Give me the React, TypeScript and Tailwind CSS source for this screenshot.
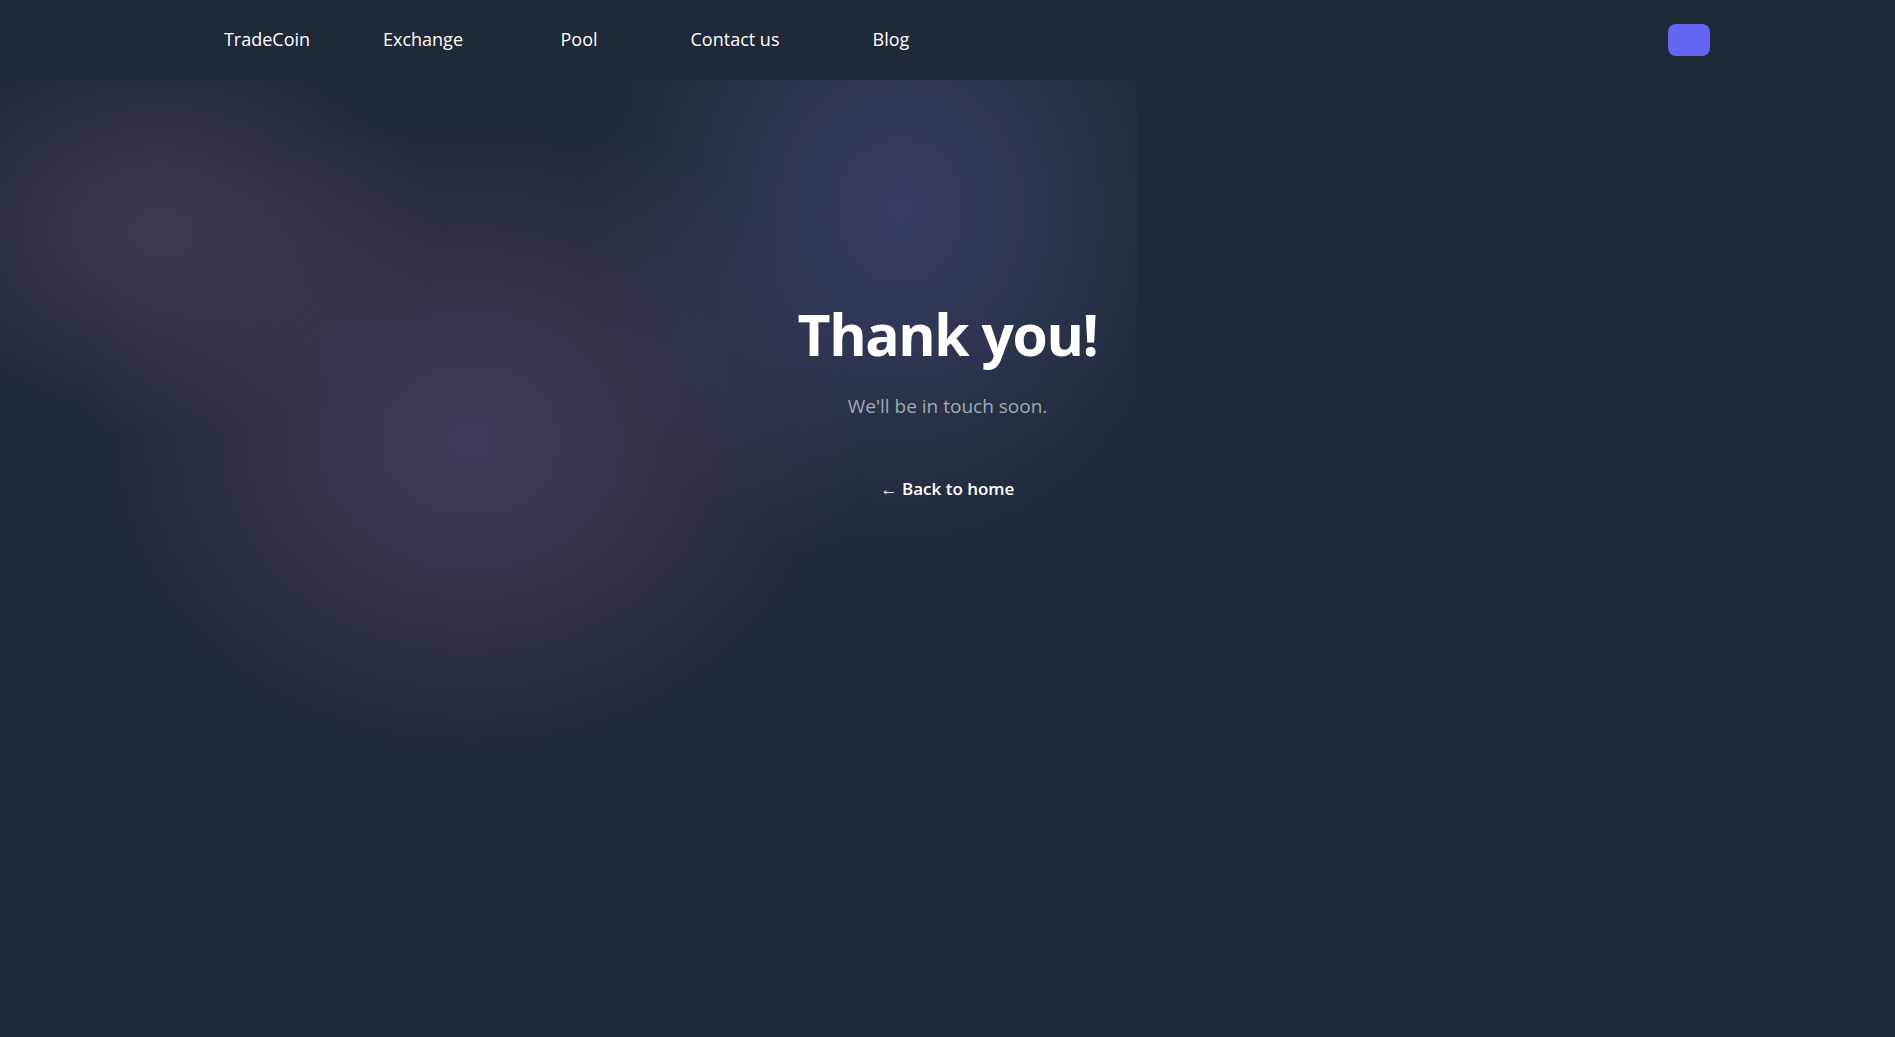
import React from 'react';

const navLinks = ['TradeCoin', 'Exchange', 'Pool', 'Contact us', 'Blog'];

const App: React.FC = () => {
  return (
    <div
      className="min-h-screen bg-[#1f2937] text-white flex flex-col"
      style={{ fontFamily: '"Open Sans", "Noto Sans", sans-serif' }}
    >
      {/* Nav */}
      <nav className="h-20 flex items-center justify-between pl-[189px] pr-[185px] bg-[#1f2937] relative z-10">
        <ul className="flex items-center -mt-[2px]">
          {navLinks.map((link) => (
            <li key={link} className="w-[156px] text-center text-lg text-white">
              <a href="#">{link}</a>
            </li>
          ))}
        </ul>
        <button className="w-[42px] h-8 rounded-lg bg-[#6366f1]" aria-label="Connect" />
      </nav>

      {/* Hero */}
      <main className="relative flex-1">
        {/* Decorative blobs */}
        <div className="absolute left-0 top-0 w-[60%] h-full overflow-hidden pointer-events-none">
          <div className="absolute left-[-120px] top-[-60px] w-[560px] h-[420px] rounded-full bg-[radial-gradient(ellipse_at_center,rgba(72,62,92,0.75),rgba(31,41,55,0)_70%)]" />
          <div className="absolute left-[60px] top-[10px] w-[820px] h-[700px] rounded-full bg-[radial-gradient(ellipse_at_center,rgba(70,60,95,0.9),rgba(31,41,55,0)_68%)]" />
          <div className="absolute left-[560px] top-[-260px] w-[680px] h-[780px] rounded-full bg-[radial-gradient(ellipse_at_center,rgba(58,62,102,0.95),rgba(31,41,55,0)_66%)]" />
        </div>

        <div className="relative flex flex-col items-center pt-[226px] text-center">
          <h1 className="text-[57px] font-bold tracking-tight leading-none">Thank you!</h1>
          <p className="mt-[29px] text-[19px] text-[#a3a8b4]">We'll be in touch soon.</p>
          <a href="#" className="mt-[55px] text-[17px] font-semibold text-white">
            ← Back to home
          </a>
        </div>
      </main>
    </div>
  );
};

export default App;
